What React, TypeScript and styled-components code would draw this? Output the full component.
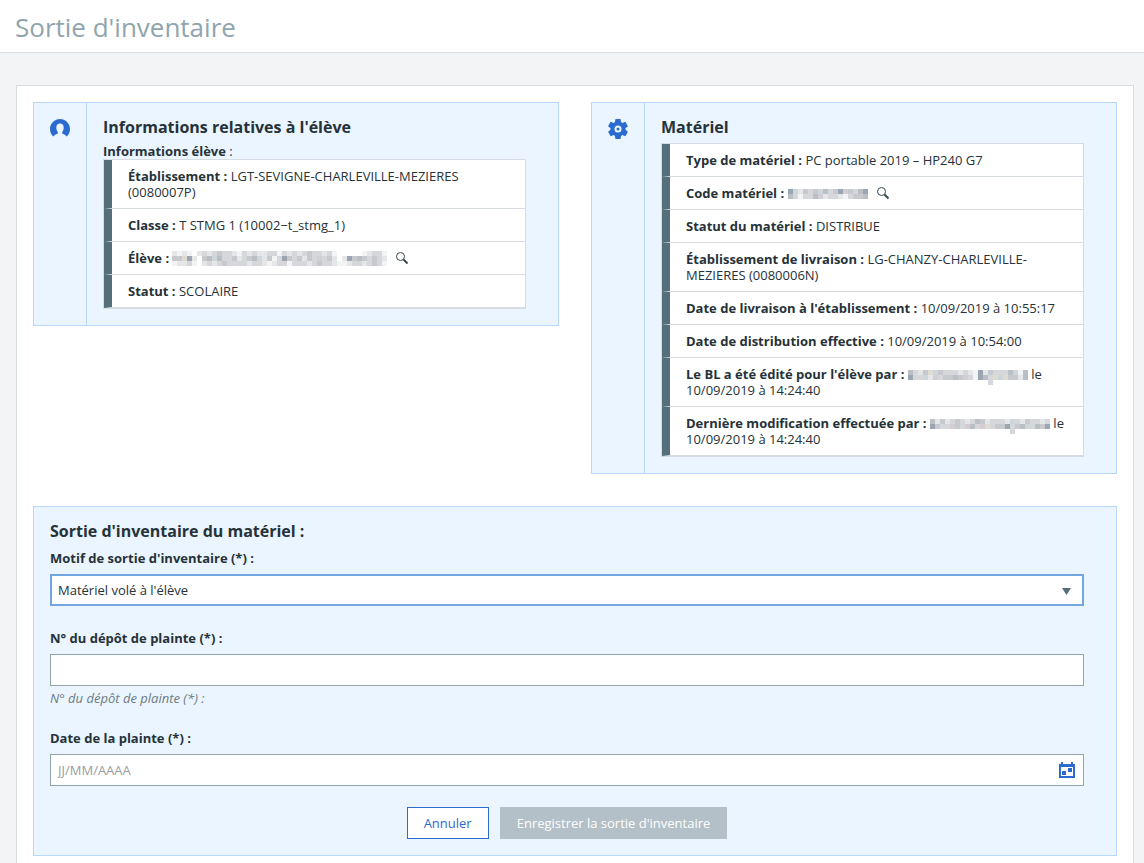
import React from 'react';
import styled, { createGlobalStyle } from 'styled-components';

const color = {
  text: '#263238',
  muted: '#90a4ae',
  line: '#d6dce1',
  blue: '#2b6bcf',
  panel: '#eaf5ff',
  panelLine: '#b8d8fa',
  stripe: '#546e7a',
};

const GlobalStyle = createGlobalStyle`
  *, *::before, *::after { box-sizing: border-box; }
  body {
    margin: 0;
    background: #f3f4f6;
    color: ${color.text};
    font: 13px/16px "Open Sans", sans-serif;
  }
  button, input, select { font: inherit; color: inherit; }
`;

const Header = styled.header`
  padding: 9px 16px 7px 15px;
  background: #fff;
  border-bottom: 1px solid ${color.line};
`;

const PageTitle = styled.h1`
  margin: 0;
  color: ${color.muted};
  font-size: 26px;
  font-weight: 400;
  line-height: 36px;
`;

const Card = styled.main`
  margin: 32px 10px 32px 16px;
  padding: 16px;
  background: #fff;
  border: 1px solid ${color.line};
`;

const Columns = styled.div`
  display: grid;
  grid-template-columns: 1fr 1fr;
  align-items: start;
  gap: 32px;
  margin-bottom: 32px;
`;

const Panel = styled.section`
  display: flex;
  background: ${color.panel};
  border: 1px solid ${color.panelLine};
`;

const PanelIcon = styled.div`
  flex: none;
  padding: 16px;
  border-right: 1px solid ${color.panelLine};
  svg { display: block; }
`;

const PanelBody = styled.div`
  flex: 1;
  min-width: 0;
  padding: 16px 32px 16px 16px;
`;

const PanelTitle = styled.h2<{ $gap: number }>`
  margin: 0 0 ${(p) => p.$gap}px;
  font-size: 16px;
  font-weight: 700;
  line-height: 16px;
`;

const Caption = styled.p`
  margin: 0;
`;

const Strong = styled.strong`
  font-weight: 700;
`;

const List = styled.ul`
  margin: 0;
  padding: 0;
  list-style: none;
  background: #fff;
  border: 1px solid ${color.line};
`;

const Row = styled.li`
  padding: 8px 16px;
  border-left: 8px solid ${color.stripe};
  border-bottom: 1px solid ${color.line};
`;

const Masked = styled.svg<{ $top: number }>`
  display: inline-block;
  margin: ${(p) => p.$top}px 0 -4px;
  vertical-align: top;
`;

const SearchButton = styled.button`
  display: inline-block;
  margin: 2px 0 0 9px;
  padding: 0;
  border: 0;
  background: none;
  line-height: 0;
  vertical-align: top;
  cursor: pointer;
`;

const Form = styled.form`
  padding: 16px 32px 16px 16px;
  background: ${color.panel};
  border: 1px solid ${color.panelLine};
`;

const Field = styled.div`
  margin-bottom: 24px;
`;

const Label = styled.label`
  display: block;
  margin-bottom: 8px;
  font-weight: 700;
`;

const Control = styled.div`
  position: relative;
`;

const Input = styled.input`
  display: block;
  width: 100%;
  height: 32px;
  padding: 0 7px;
  background: #fff;
  border: 1px solid ${color.muted};
  border-radius: 0;
  outline: none;
  &::placeholder { color: #9a9da0; opacity: 1; }
`;

const Select = styled.select`
  display: block;
  width: 100%;
  height: 32px;
  padding: 0 6px;
  appearance: none;
  background: #fff;
  border: 2px solid #73a6e1;
  border-radius: 0;
  outline: none;
`;

const Caret = styled.svg`
  position: absolute;
  top: 14px;
  right: 13px;
  pointer-events: none;
`;

const CalendarButton = styled.button`
  position: absolute;
  top: 8px;
  right: 9px;
  padding: 0;
  border: 0;
  background: none;
  line-height: 0;
  cursor: pointer;
`;

const Help = styled.p`
  margin: 4px 0 0;
  color: #6d7a81;
  font-style: italic;
`;

const Actions = styled.div`
  display: flex;
  justify-content: center;
  gap: 11px;
  margin-top: -3px;
`;

const Button = styled.button`
  height: 32px;
  padding: 0 16px;
  border: 1px solid ${color.blue};
  background: #fff;
  color: ${color.blue};
  cursor: pointer;
  &:disabled {
    border-color: #b3c0c7;
    background: #b3c0c7;
    color: #fff;
    cursor: default;
  }
`;

const tones = ['#ffffff', '#f2f3f4', '#e4e6e8', '#d6d7da', '#c8c9ce', '#b9bfc4', '#9ca6b2', '#cdd6da', '#d4cdd6', '#dedbd0'];

/* Each string is one line of 5px cells; every digit picks a tone. */
function Mosaic({ rows, top = 4 }: { rows: string[]; top?: number }) {
  const width = rows[0].length * 5;
  const height = rows.length * 5;
  return (
    <Masked $top={top} width={width} height={height} viewBox={`0 0 ${width} ${height}`} shapeRendering="crispEdges" aria-hidden="true">
      {rows.flatMap((row, y) =>
        [...row].map((tone, x) =>
          tone === '0' ? null : (
            <rect key={`${x}-${y}`} x={x * 5} y={y * 5} width={5} height={5} fill={tones[Number(tone)]} />
          ),
        ),
      )}
    </Masked>
  );
}

const Search = ({ label }: { label: string }) => (
  <SearchButton type="button" aria-label={label}>
    <svg width="13" height="13" viewBox="0 0 13 13" fill="none" stroke="#37474f">
      <circle cx="4.500" cy="4.500" r="4" strokeWidth="1" />
      <path d="M7.500 7.500l4 4" strokeWidth="2" />
    </svg>
  </SearchButton>
);

const PersonIcon = () => (
  <svg width="20" height="20" viewBox="0 0 20 20" fill={color.blue}>
    <path d="M10 0C4.500 0 0 4.500 0 10c0 3 1.200 5.700 3.300 7.600C4 16 6 15.300 7.800 14.400v-1.500C6.800 11.700 6.300 10 6.300 8.400 6.300 6 7.800 4.500 10 4.500s3.700 1.500 3.700 3.900c0 1.600-.5 3.300-1.500 4.500v1.500c1.800.9 3.800 1.600 4.500 3.200C18.800 15.700 20 13 20 10 20 4.500 15.500 0 10 0z" />
  </svg>
);

const GearIcon = () => (
  <svg width="20" height="20" viewBox="0 0 20 20">
    <g fill={color.blue}>
      <circle cx="10" cy="10" r="7.500" />
      {[0, 60, 120].map((angle) => (
        <path key={angle} d="M7.500 0h5l.8 4v12l-.8 4h-5l-.8-4V4z" transform={`rotate(${angle} 10 10)`} />
      ))}
    </g>
    <circle cx="10" cy="10" r="2.500" fill={color.blue} stroke={color.panel} strokeWidth="2" />
  </svg>
);

const CalendarIcon = () => (
  <svg width="16" height="16" viewBox="0 0 16 16" fill={color.blue} shapeRendering="crispEdges">
    <path d="M2 0h2v2h8V0h2v2h2v14H0V2h2zM2 5v9h12V5z" fillRule="evenodd" />
    <path d="M9 6h4v4H9zM3 9h4v4H3z" />
  </svg>
);

export default function App() {
  return (
    <>
      <GlobalStyle />
      <Header>
        <PageTitle>Sortie d'inventaire</PageTitle>
      </Header>
      <Card>
        <Columns>
          <Panel>
            <PanelIcon><PersonIcon /></PanelIcon>
            <PanelBody>
              <PanelTitle $gap={8}>Informations relatives à l'élève</PanelTitle>
              <Caption><Strong>Informations élève</Strong> :</Caption>
              <List>
                <Row><Strong>Établissement :</Strong> LGT-SEVIGNE-CHARLEVILLE-MEZIERES (0080007P)</Row>
                <Row><Strong>Classe :</Strong> T STMG 1 (10002−t_stmg_1)</Row>
                <Row>
                  <Strong>Élève :</Strong>{' '}
                  <Mosaic
                    top={1}
                    rows={[
                      '2121023234332132322331323234332310000012331',
                      '4496204575334234572413643424383420264543432',
                      '1223102323433332332123313332343321123323431',
                    ]}
                  />
                  <Search label="Rechercher l'élève" />
                </Row>
                <Row><Strong>Statut :</Strong> SCOLAIRE</Row>
              </List>
            </PanelBody>
          </Panel>

          <Panel>
            <PanelIcon><GearIcon /></PanelIcon>
            <PanelBody>
              <PanelTitle $gap={8}>Matériel</PanelTitle>
              <List>
                <Row><Strong>Type de matériel :</Strong> PC portable 2019 – HP240 G7</Row>
                <Row>
                  <Strong>Code matériel :</Strong>{' '}
                  <Mosaic rows={['6724347534684356', '5313358233213445']} />
                  <Search label="Rechercher le matériel" />
                </Row>
                <Row><Strong>Statut du matériel :</Strong> DISTRIBUE</Row>
                <Row><Strong>Établissement de livraison :</Strong> LG-CHANZY-CHARLEVILLE-MEZIERES (0080006N)</Row>
                <Row><Strong>Date de livraison à l'établissement :</Strong> 10/09/2019 à 10:55:17</Row>
                <Row><Strong>Date de distribution effective :</Strong> 10/09/2019 à 10:54:00</Row>
                <Row>
                  <Strong>Le BL a été édité pour l'élève par :</Strong>{' '}
                  <Mosaic
                    rows={['532497433323216243335715', '633728344548316539794425', '000000000000000030000000']}
                  />{' '}
                  le 10/09/2019 à 14:24:40
                </Row>
                <Row>
                  <Strong>Dernière modification effectuée par :</Strong>{' '}
                  <Mosaic
                    rows={['524234323542333273243323', '643384385389344634573546', '000000000000000030000000']}
                  />{' '}
                  le 10/09/2019 à 14:24:40
                </Row>
              </List>
            </PanelBody>
          </Panel>
        </Columns>

        <Form onSubmit={(e) => e.preventDefault()}>
          <PanelTitle $gap={11}>Sortie d'inventaire du matériel :</PanelTitle>
          <Field>
            <Label htmlFor="motif">Motif de sortie d'inventaire (*) :</Label>
            <Control>
              <Select id="motif" defaultValue="vol">
                <option value="vol">Matériel volé à l'élève</option>
              </Select>
              <Caret width="9" height="7" viewBox="0 0 9 7" aria-hidden="true">
                <path d="M0 0h9L4.500 7z" fill={color.stripe} />
              </Caret>
            </Control>
          </Field>
          <Field>
            <Label htmlFor="depot">N° du dépôt de plainte (*) :</Label>
            <Input id="depot" type="text" aria-describedby="depot-aide" />
            <Help id="depot-aide">N° du dépôt de plainte (*) :</Help>
          </Field>
          <Field>
            <Label htmlFor="date">Date de la plainte (*) :</Label>
            <Control>
              <Input id="date" type="text" placeholder="JJ/MM/AAAA" />
              <CalendarButton type="button" aria-label="Choisir une date"><CalendarIcon /></CalendarButton>
            </Control>
          </Field>
          <Actions>
            <Button type="button">Annuler</Button>
            <Button type="submit" disabled>Enregistrer la sortie d'inventaire</Button>
          </Actions>
        </Form>
      </Card>
    </>
  );
}
